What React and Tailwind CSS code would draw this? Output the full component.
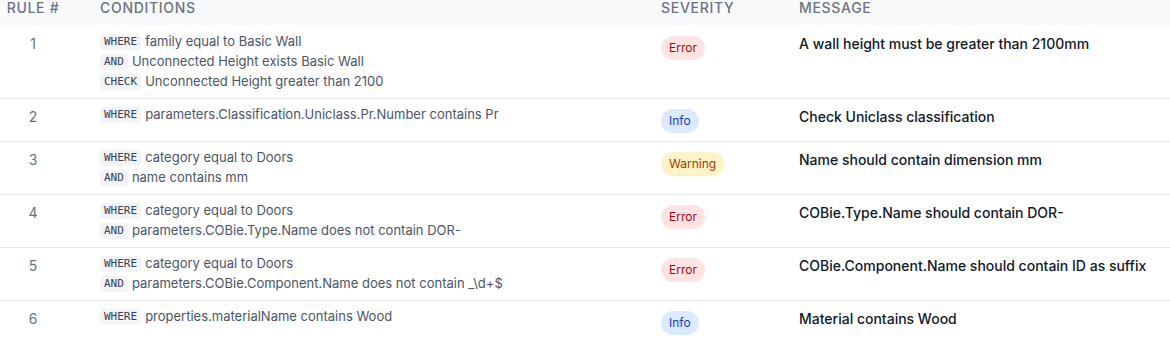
const rules = [
  {
    id: 1,
    conditions: [
      ['WHERE', 'family equal to Basic Wall'],
      ['AND', 'Unconnected Height exists Basic Wall'],
      ['CHECK', 'Unconnected Height greater than 2100'],
    ],
    severity: 'Error',
    message: 'A wall height must be greater than 2100mm',
  },
  {
    id: 2,
    conditions: [['WHERE', 'parameters.Classification.Uniclass.Pr.Number contains Pr']],
    severity: 'Info',
    message: 'Check Uniclass classification',
  },
  {
    id: 3,
    conditions: [
      ['WHERE', 'category equal to Doors'],
      ['AND', 'name contains mm'],
    ],
    severity: 'Warning',
    message: 'Name should contain dimension mm',
  },
  {
    id: 4,
    conditions: [
      ['WHERE', 'category equal to Doors'],
      ['AND', 'parameters.COBie.Type.Name does not contain DOR-'],
    ],
    severity: 'Error',
    message: 'COBie.Type.Name should contain DOR-',
  },
  {
    id: 5,
    conditions: [
      ['WHERE', 'category equal to Doors'],
      ['AND', 'parameters.COBie.Component.Name does not contain _\\d+$'],
    ],
    severity: 'Error',
    message: 'COBie.Component.Name should contain ID as suffix',
  },
  {
    id: 6,
    conditions: [['WHERE', 'properties.materialName contains Wood']],
    severity: 'Info',
    message: 'Material contains Wood',
  },
];

const badgeStyles = {
  Error: 'bg-red-100 text-red-800',
  Info: 'bg-blue-100 text-blue-800',
  Warning: 'bg-amber-100 text-amber-800',
};

const cols = 'grid grid-cols-[100px_561px_138px_1fr]';

function SeverityBadge({ level }) {
  return (
    <span className={`inline-flex items-center h-6 px-2 rounded-full text-xs ${badgeStyles[level]}`}>
      {level}
    </span>
  );
}

export default function App() {
  return (
    <div
      className="w-[1170px] h-[343px] overflow-hidden bg-white"
      style={{ fontFamily: 'Inter, "Noto Sans", sans-serif' }}
    >
      <div className={`${cols} h-[26px] bg-gray-50 text-sm leading-4 font-medium uppercase tracking-wider text-gray-500`}>
        <div className="w-[66px] text-center">Rule #</div>
        <div>Conditions</div>
        <div>Severity</div>
        <div>Message</div>
      </div>

      {rules.map((rule) => (
        <div key={rule.id} className={`${cols} border-b border-gray-200`}>
          <div className="w-[66px] pt-2 text-center text-sm leading-5 text-gray-500">{rule.id}</div>
          <div className="py-1.5 flex flex-col">
            {rule.conditions.map(([op, text], i) => (
              <div key={i} className="h-5 flex items-center gap-1">
                <span
                  className="h-4 px-1 rounded bg-gray-100 text-[11px] leading-4 text-gray-700"
                  style={{ fontFamily: '"DejaVu Sans Mono", monospace' }}
                >
                  {op}
                </span>
                <span className="text-[13px] text-gray-600">{text}</span>
              </div>
            ))}
          </div>
          <div className="py-2">
            <SeverityBadge level={rule.severity} />
          </div>
          <div className="pt-2 text-sm leading-5 font-medium text-gray-900">{rule.message}</div>
        </div>
      ))}
    </div>
  );
}
